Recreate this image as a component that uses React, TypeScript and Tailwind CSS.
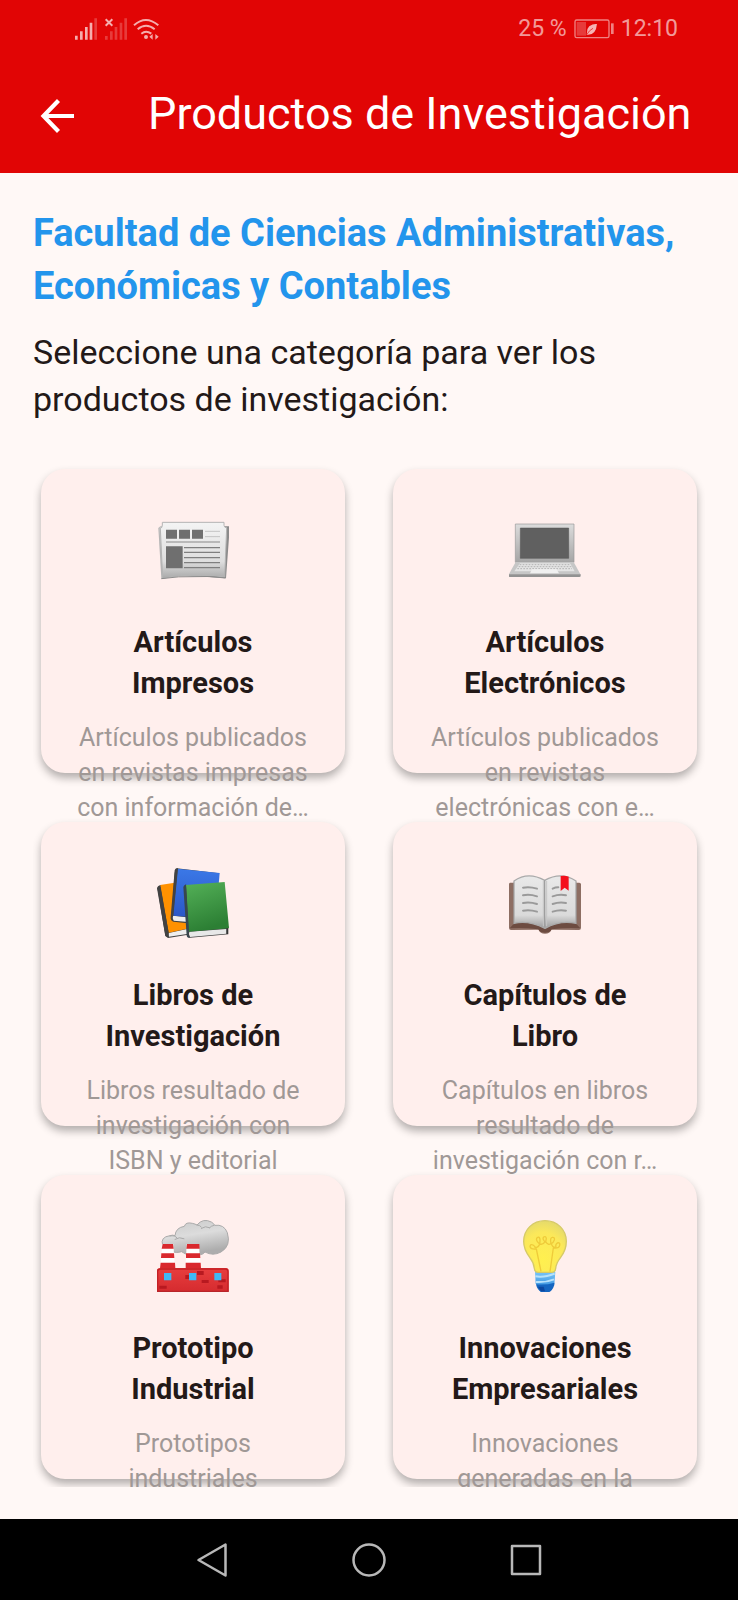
import type { ReactNode } from "react";

type Category = {
  title: string[];
  description: string[];
  icon: ReactNode;
};

const iconClass = "block h-[72px] w-[72px] shrink-0";

function NewspaperIcon() {
  return (
    <svg className={iconClass} viewBox="411 189 216 216" aria-hidden="true">
      <defs>
        <linearGradient id="paper" x1="0" y1="0" x2="0" y2="1">
          <stop offset="0" stopColor="#f4f4f4" />
          <stop offset="0.7" stopColor="#dedede" />
          <stop offset="1" stopColor="#a9a9a9" />
        </linearGradient>
      </defs>
      <path d="M614 226h12q4 0 3 6l-11 150-90-6z" fill="#8b8b8b" />
      <path d="M415 231q3-5 12-5l10 156-13 1z" fill="#b5b5b5" />
      <path d="M418 234l12 146q60-8 94-6 50-2 86 4l11-148-10-4H420z" fill="#c9c9c9" />
      <path d="M427 214h185v9q0 6 8 8l-6 147q-50-8-91-2-40-6-95 6l-7-150q6-1 6-10z" fill="url(#paper)" stroke="#b4b4b4" strokeWidth="3" />
      <path d="M424 383q55-8 98-6 45-3 94 4" fill="none" stroke="#8b8b8b" strokeWidth="3" />
      <path d="M438 236h33v27h-33zM477 236h33v27h-33zM516 236h33v27h-33zM438 286h50v66h-50z" fill="#6f6f6f" />
      <path d="M555 241h45M555 257h45" stroke="#c3c3c3" strokeWidth="3" />
      <path d="M438 273h162" stroke="#a9a9a9" strokeWidth="5" />
      <path d="M492 290h108M492 304h108M492 320h108M492 335h108M492 350h108" stroke="#7f7f7f" strokeWidth="3.5" />
    </svg>
  );
}

function LaptopIcon() {
  return (
    <svg className={iconClass} viewBox="422 189 216 216" aria-hidden="true">
      <defs>
        <linearGradient id="lid" x1="0" y1="0" x2="0" y2="1">
          <stop offset="0" stopColor="#dcdcdc" />
          <stop offset="1" stopColor="#a5a5a5" />
        </linearGradient>
      </defs>
      <path d="M441 219h176v115H441z" fill="url(#lid)" stroke="#999" strokeWidth="2" />
      <path d="M456 231h145v91H456z" fill="#606060" stroke="#505050" strokeWidth="1.5" />
      <path d="M442 333h174l21 38H421z" fill="#c6c6c6" />
      <path d="M421 370h216v5q0 3-4 3H425q-4 0-4-3z" fill="#929292" />
      <path d="M455 337h150l14 24H438z" fill="#e4e4e4" />
      <path d="M454 341h152M451 347h158M447 353h164" stroke="#b3b3b3" strokeWidth="3" strokeDasharray="5 4" />
      <path d="M491 355h74l7 12h-87z" fill="#f0f0f0" />
    </svg>
  );
}

function BooksIcon() {
  return (
    <svg className={iconClass} viewBox="51 48 216 216" aria-hidden="true">
      <defs>
        <linearGradient id="green" x1="0" y1="0" x2="0.3" y2="1">
          <stop offset="0" stopColor="#54b158" />
          <stop offset="1" stopColor="#2c7f34" />
        </linearGradient>
        <linearGradient id="blue" x1="0" y1="0" x2="0" y2="1">
          <stop offset="0" stopColor="#3b78e7" />
          <stop offset="1" stopColor="#2a56c6" />
        </linearGradient>
      </defs>
      <path d="M60 104L52 110 76 255 84 261 144 251V232z" fill="#424242" />
      <path d="M86 246l55-12v15l-54 8z" fill="#eee" />
      <path d="M60 102l54-8 34 138-62 13z" fill="#ff9100" />
      <path d="M61 102l25 143-3 14-7-5-25-142q1-7 10-10z" fill="#424242" />
      <path d="M110 52q-5 4-6 15L94 201q0 10 7 11l42 5 95-150z" fill="#424242" />
      <path d="M99 194l56 6v14l-54-5q-5-8-2-15z" fill="#eee" />
      <path d="M113 53l126 13-12 137-128-9z" fill="url(#blue)" />
      <path d="M114 52L100 194l-4 8 5 10-7-4q-3-4-2-10l12-140q2-8 10-6z" fill="#424242" />
      <path d="M137 100l-4 8 9 147q1 6 8 5l115-10V225z" fill="#424242" />
      <path d="M148 242l111-8v14l-109 10q-6-8-2-16z" fill="#e8e8e8" />
      <path d="M138 102l116-9 13 139-121 10z" fill="url(#green)" />
      <path d="M138 101l9 141-3 8 6 10q-9 2-10-6l-10-146q2-7 8-7z" fill="#37474f" />
      <path d="M262 232v17" stroke="#333" strokeWidth="4" />
    </svg>
  );
}

function OpenBookIcon() {
  return (
    <svg className={iconClass} viewBox="59 48 216 216" aria-hidden="true">
      <defs>
        <linearGradient id="page" x1="0" y1="0" x2="0" y2="1">
          <stop offset="0" stopColor="#e9e9e9" />
          <stop offset="0.75" stopColor="#dadada" />
          <stop offset="1" stopColor="#9c9c9c" />
        </linearGradient>
      </defs>
      <path d="M62 95h208q5 0 5 5v130q0 7-6 7l-83-1q-4 12-19 12t-19-12l-83 1q-6 0-6-7V100q0-5 3-5z" fill="#8d6e63" />
      <path d="M72 95h190v125l11 12q-40-3-86 3-3 10-20 10t-20-10q-45-6-86-3l11-12z" fill="#6d4c41" />
      <path d="M74 90q42-30 92-2 50-28 94 2v127q-48-10-93 15-50-25-93-15z" fill="url(#page)" stroke="#aaa" strokeWidth="4" />
      <path d="M166 88v140" stroke="#9e9e9e" strokeWidth="4" />
      <path d="M162 90v136M172 90v136" stroke="#c5c5c5" strokeWidth="3" />
      <g fill="none" stroke="#9a9a9a" strokeWidth="6" strokeLinecap="round">
        <path d="M101 110q20-4 42 3M101 133q20-4 42 3M101 156q20-4 42 3M101 179q20-4 42 3" />
        <path d="M190 113q8-4 17-4M190 136q20-7 40-3M190 159q20-7 40-3M190 182q20-7 40-3" />
      </g>
      <path d="M214 75q14-2 24 2v42l-12-9-12 10z" fill="#f4101c" />
    </svg>
  );
}

function FactoryIcon() {
  return (
    <svg className={iconClass} viewBox="51 57 216 216" aria-hidden="true">
      <defs>
        <linearGradient id="smoke" x1="0" y1="0" x2="0.3" y2="1">
          <stop offset="0" stopColor="#c9c9c9" />
          <stop offset="0.5" stopColor="#dcdcdc" />
          <stop offset="1" stopColor="#adadad" />
        </linearGradient>
        <linearGradient id="brick" x1="0" y1="0" x2="0" y2="1">
          <stop offset="0" stopColor="#e83e3e" />
          <stop offset="1" stopColor="#d52b2f" />
        </linearGradient>
      </defs>
      <path
        d="M68 133q-8-25 22-29 8-3 15 0 2-24 28-28 4-14 24-9 9 2 14 5 18-22 43-9 8 5 10 10 28-4 38 22 12 40-19 58-24 13-48 0-10 13-30 6-20 8-40-7-30 10-57-19z"
        fill="url(#smoke)"
        stroke="#aaa"
        strokeWidth="3"
      />
      <path d="M90 105q15-4 22 7M105 115q13-9 27-2M171 72q9 0 13 6M184 82q12-9 25-2M222 73q-10 2-13 7" fill="none" stroke="#aaa" strokeWidth="3" strokeLinecap="round" />
      <path d="M67 129h33l5 75H61z" fill="#fff" />
      <path d="M140 129h37l5 75h-46z" fill="#fff" />
      <path d="M68 129h31l2 14H65zM64 157h38l1 14H63zM62 185h43l1 17H60zM141 129h37l1 14h-40zM138 157h42l1 14h-43zM137 185h45l1 17h-46z" fill="#d9292e" />
      <path d="M50 211q0-10 10-10h198q8 0 8 8v63H50z" fill="url(#brick)" />
      <path d="M53 271V211q0-7 9-7h194q8 0 8 8v59" fill="none" stroke="#c42025" strokeWidth="4" />
      <path d="M171 210h20v12h-20zM136 222h12v12h-12zM185 237h21v9h-21zM235 235h22v9h-22zM58 254h22v9H58zM232 253h16v10h-16z" fill="#b81920" />
      <path d="M72 216h22v22H72zM147 216h22v22h-22zM223 216h21v22h-21z" fill="#40b9f5" />
      <path d="M50 271h216" stroke="#b8242a" strokeWidth="4" />
    </svg>
  );
}

function BulbIcon() {
  return (
    <svg className={iconClass} viewBox="58 57 216 216" aria-hidden="true">
      <defs>
        <radialGradient id="glass" cx="0.45" cy="0.75" r="0.75">
          <stop offset="0" stopColor="#fff04f" />
          <stop offset="0.7" stopColor="#fbe85a" />
          <stop offset="1" stopColor="#e5da6b" />
        </radialGradient>
        <linearGradient id="base" x1="0" y1="0" x2="0" y2="1">
          <stop offset="0" stopColor="#78c4f8" />
          <stop offset="1" stopColor="#2a86d8" />
        </linearGradient>
      </defs>
      <path d="M136 213h61l-3 35-14 24h-27l-15-25z" fill="url(#base)" />
      <path
        d="M166 59C129 59 102 86 102 121c0 22 8 35 18 48 10 13 13 21 14 33 1 9 4 12 11 12h42c7 0 10-3 11-12 1-12 5-20 15-33 10-13 17-26 17-48 0-35-27-62-64-62z"
        fill="url(#glass)"
        stroke="#d6ca68"
        strokeWidth="4"
      />
      <path d="M154 211l-14-67q-18 2-19-8 2-8 9-4 8 6 6 8 11-1 14-11-12-10-9-17 8-8 10 3 0 11-1 14 11 3 16-7-9-8-4-14 7-4 8 5l-2 9q7 12 16 6-4-18 4-19 8-1 6 8-3 8-9 11 3 12 14 11-3-10 6-14 7 0 5 8-2 10-19 8l-10 71" fill="none" stroke="#efcb3a" strokeWidth="4" strokeLinejoin="round" />
      <path d="M137 226q25 5 58-8M139 243q30 2 54-8" stroke="#b8e2fb" strokeWidth="6" fill="none" />
      <path d="M139 250q30 3 55-5v7q-6 18-16 21h-24q-12-8-15-23z" fill="#1565c0" />
      <path d="M145 257h17l4 14h-12z" fill="#0d479f" />
    </svg>
  );
}

function SignalIcons() {
  return (
    <svg className="block h-6 w-[88px]" viewBox="222 50 264 72" aria-label="Señal móvil y wifi" role="img">
      <g fill="#fff">
        <g opacity="0.68">
          <path d="M225 106h8v12h-8zM240 93h8v25h-8zM255 80h8v38h-8zM269 67h8v51h-8z" />
        </g>
        <path d="M283 54h8v64h-8zM315 107h8v11h-8zM330 93h8v25h-8zM344 80h8v38h-8zM359 67h8v51h-8zM373 54h8v64h-8z" opacity="0.22" />
      </g>
      <g fill="none" stroke="#fff" opacity="0.68">
        <path d="M317 57l20 19M337 57l-20 19" strokeWidth="6" />
        <path d="M402 75q35-32 73 0M413 87q25-21 51 0M424 100q14-11 30 0" strokeWidth="6" />
        <circle cx="438" cy="110" r="3" strokeWidth="6" />
      </g>
      <path d="M458 101v17l-10-9zM466 101v17l10-9z" fill="#fff" opacity="0.65" />
    </svg>
  );
}

function BatteryIcon() {
  return (
    <svg className="block h-5 w-10" viewBox="616 58 120 60" aria-hidden="true">
      <rect x="619" y="61" width="102" height="53" rx="5" fill="none" stroke="#fff" strokeOpacity="0.5" strokeWidth="4" />
      <path d="M624 67h28v41h-28z" fill="#fff" opacity="0.22" />
      <path d="M686 72q-33 2-31 27l-1 6q28 3 31-33z" fill="#fff" opacity="0.7" />
      <path d="M655 104q6-12 18-18" stroke="#e10505" strokeWidth="2" fill="none" />
      <path d="M727 71h8v32h-8z" fill="#fff" opacity="0.5" />
    </svg>
  );
}

const categories: Category[] = [
  {
    title: ["Artículos", "Impresos"],
    description: ["Artículos publicados", "en revistas impresas", "con información de…"],
    icon: <NewspaperIcon />,
  },
  {
    title: ["Artículos", "Electrónicos"],
    description: ["Artículos publicados", "en revistas", "electrónicas con e…"],
    icon: <LaptopIcon />,
  },
  {
    title: ["Libros de", "Investigación"],
    description: ["Libros resultado de", "investigación con", "ISBN y editorial"],
    icon: <BooksIcon />,
  },
  {
    title: ["Capítulos de", "Libro"],
    description: ["Capítulos en libros", "resultado de", "investigación con r…"],
    icon: <OpenBookIcon />,
  },
  {
    title: ["Prototipo", "Industrial"],
    description: ["Prototipos", "industriales"],
    icon: <FactoryIcon />,
  },
  {
    title: ["Innovaciones", "Empresariales"],
    description: ["Innovaciones", "generadas en la"],
    icon: <BulbIcon />,
  },
];

function Lines({ lines }: { lines: string[] }) {
  return (
    <>
      {lines.map((line) => (
        <span key={line} className="block whitespace-nowrap">
          {line}
        </span>
      ))}
    </>
  );
}

function CategoryCard({ title, description, icon }: Category) {
  return (
    <button
      type="button"
      className="relative z-0 flex aspect-square min-h-0 w-full flex-col items-center justify-start rounded-3xl bg-[#ffefed] pt-[45px] text-center shadow-[0_5px_8px_rgba(0,0,0,0.3)]"
    >
      {icon}
      <span className="mt-9 block text-[29px] leading-[41px] font-bold text-[#231918]">
        <Lines lines={title} />
      </span>
      <span className="mt-4 block text-[25px] leading-[35px] text-[#a09896]">
        <Lines lines={description} />
      </span>
    </button>
  );
}

export default function App() {
  return (
    <div className="flex h-screen flex-col bg-[#fff8f6] font-['Roboto',sans-serif] text-[#231918]">
      <header className="shrink-0 bg-[#e10505] text-white">
        <div className="flex h-[58px] items-center justify-between pr-[60px] pl-[74px]">
          <SignalIcons />
          <div className="flex items-center gap-[7px] text-[23px] leading-8 text-white/60">
            <span>25 %</span>
            <BatteryIcon />
            <span>12:10</span>
          </div>
        </div>
        <div className="flex h-[115px] items-center gap-[72px] pl-10">
          <button type="button" aria-label="Volver" className="shrink-0">
            <svg className="block h-9 w-9" viewBox="0 0 36 36" fill="none" stroke="#fff" strokeWidth="4.2" aria-hidden="true">
              <path d="M34 18H4M18.500 2.500L3.500 18l15 15.500" />
            </svg>
          </button>
          <h1 className="pb-1 text-[45px] leading-[54px] whitespace-nowrap">Productos de Investigación</h1>
        </div>
      </header>

      <main className="flex min-h-0 flex-1 flex-col px-[33px] pt-[34px] pb-8">
        <h2 className="text-[38px] leading-[53px] font-bold text-[#2395ec]">
          <Lines lines={["Facultad de Ciencias Administrativas,", "Económicas y Contables"]} />
        </h2>
        <p className="mt-4 text-[34px] leading-[47px]">
          <Lines lines={["Seleccione una categoría para ver los", "productos de investigación:"]} />
        </p>
        <div className="mt-8 grid min-h-0 flex-1 grid-cols-2 content-start items-start gap-x-12 gap-y-[49px] overflow-y-auto px-2 pt-[14px] [scrollbar-width:none]">
          {categories.map((category) => (
            <CategoryCard key={category.title.join(" ")} {...category} />
          ))}
        </div>
      </main>

      <nav className="flex h-[81px] shrink-0 items-center justify-center bg-black" aria-label="Navegación del sistema">
        <button type="button" aria-label="Atrás" className="flex w-[157px] justify-center">
          <svg className="h-9 w-9" viewBox="0 0 36 36" fill="none" stroke="#b8b8b8" strokeWidth="2.5" strokeLinejoin="round" aria-hidden="true">
            <path d="M31.500 2.500v31L4.500 18z" />
          </svg>
        </button>
        <button type="button" aria-label="Inicio" className="flex w-[157px] justify-center">
          <svg className="h-9 w-9" viewBox="0 0 36 36" fill="none" stroke="#b8b8b8" strokeWidth="2.500" aria-hidden="true">
            <circle cx="18" cy="18" r="15.500" />
          </svg>
        </button>
        <button type="button" aria-label="Recientes" className="flex w-[157px] justify-center">
          <svg className="h-9 w-9" viewBox="0 0 36 36" fill="none" stroke="#b8b8b8" strokeWidth="2.500" strokeLinejoin="round" aria-hidden="true">
            <rect x="4" y="4" width="28" height="28" />
          </svg>
        </button>
      </nav>
    </div>
  );
}
